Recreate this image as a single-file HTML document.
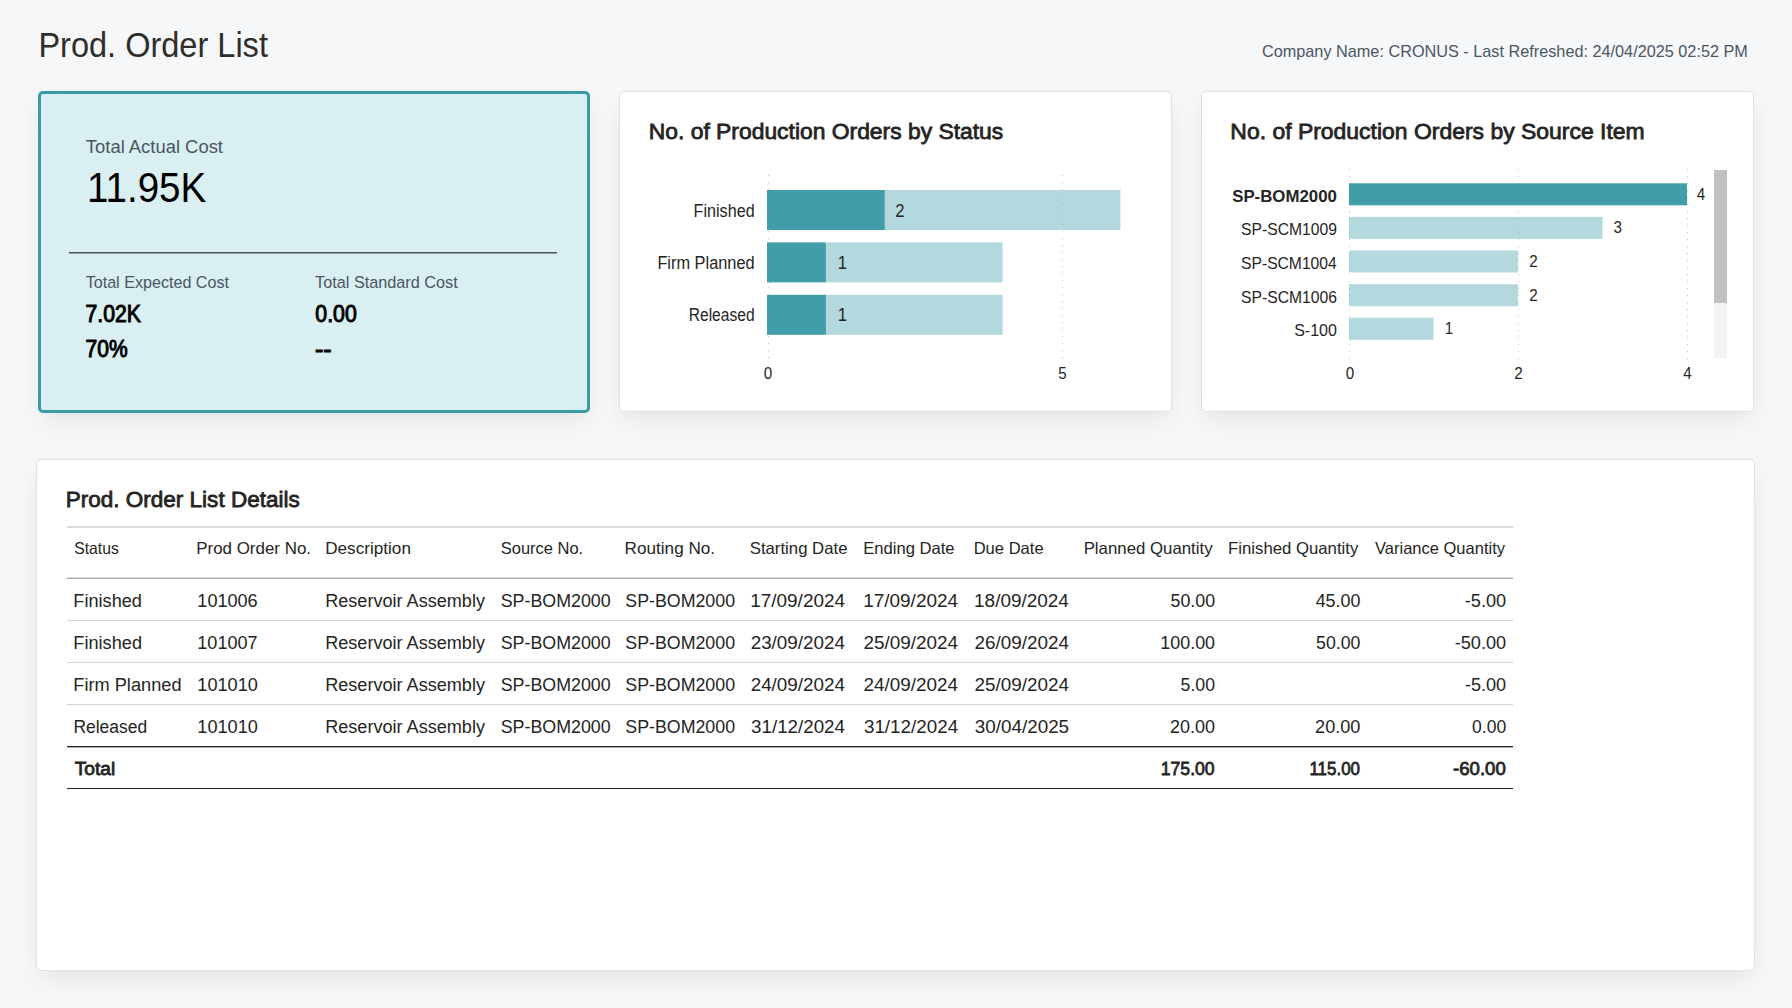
<!DOCTYPE html>
<html><head><meta charset="utf-8"><title>Prod. Order List</title>
<style>
html,body{margin:0;padding:0;width:1792px;height:1008px;overflow:hidden;background:#f6f7f9;}
.card{position:absolute;box-sizing:border-box;background:#fff;border:1px solid #e2e2e2;border-radius:5px;box-shadow:0 10px 26px -4px rgba(0,0,0,0.085);}
#c1{left:38px;top:91px;width:552px;height:322px;background:#d9eff1;border:3px solid #3a9ba6;}
#c2{left:619px;top:91px;width:553px;height:321px;}
#c3{left:1201px;top:91px;width:553px;height:321px;}
#c4{left:36px;top:459px;width:1719px;height:512px;}
svg{position:absolute;left:0;top:0;}
text{font-family:"Liberation Sans",sans-serif;}
</style></head><body>
<div class="card" id="c1"></div><div class="card" id="c2"></div><div class="card" id="c3"></div><div class="card" id="c4"></div>
<svg width="1792" height="1008" viewBox="0 0 1792 1008">
<rect x="69" y="252" width="488" height="1.5" fill="#4b5563"/>
<line x1="768.5" y1="175" x2="768.5" y2="360" stroke="rgba(0,0,0,0.22)" stroke-width="1" stroke-dasharray="1.2 5.8"/>
<line x1="1062.5" y1="175" x2="1062.5" y2="360" stroke="rgba(0,0,0,0.22)" stroke-width="1" stroke-dasharray="1.2 5.8"/>
<line x1="1349.5" y1="169" x2="1349.5" y2="360" stroke="rgba(0,0,0,0.22)" stroke-width="1" stroke-dasharray="1.2 5.8"/>
<line x1="1518.5" y1="169" x2="1518.5" y2="360" stroke="rgba(0,0,0,0.22)" stroke-width="1" stroke-dasharray="1.2 5.8"/>
<line x1="1687.5" y1="169" x2="1687.5" y2="360" stroke="rgba(0,0,0,0.22)" stroke-width="1" stroke-dasharray="1.2 5.8"/>
<rect x="884.8" y="190.0" width="235.6" height="40" fill="rgba(66,157,171,0.4)"/>
<rect x="767" y="190.0" width="117.8" height="40" fill="#429dab"/>
<rect x="825.9" y="242.4" width="176.7" height="40" fill="rgba(66,157,171,0.4)"/>
<rect x="767" y="242.4" width="58.9" height="40" fill="#429dab"/>
<rect x="825.9" y="294.8" width="176.7" height="40" fill="rgba(66,157,171,0.4)"/>
<rect x="767" y="294.8" width="58.9" height="40" fill="#429dab"/>
<rect x="1349" y="183.3" width="338.0" height="22" fill="#429dab"/>
<rect x="1349" y="216.9" width="253.5" height="22" fill="rgba(66,157,171,0.4)"/>
<rect x="1349" y="250.5" width="169.0" height="22" fill="rgba(66,157,171,0.4)"/>
<rect x="1349" y="284.2" width="169.0" height="22" fill="rgba(66,157,171,0.4)"/>
<rect x="1349" y="317.8" width="84.5" height="22" fill="rgba(66,157,171,0.4)"/>
<rect x="1714" y="170" width="13" height="188" fill="#f3f3f3"/>
<rect x="1714" y="170" width="13" height="133" fill="#c1c1c1"/>
<rect x="67" y="526" width="1446" height="2" fill="#d9dbe0"/>
<rect x="67" y="577" width="1446" height="1" fill="#d8dbe0"/>
<rect x="67" y="578" width="1446" height="1" fill="#a5abb5"/>
<rect x="67" y="620" width="1446" height="1" fill="#d1d4d8"/>
<rect x="67" y="662" width="1446" height="1" fill="#d1d4d8"/>
<rect x="67" y="704" width="1446" height="1" fill="#d1d4d8"/>
<rect x="67" y="746" width="1446" height="1" fill="#222"/>
<rect x="67" y="747" width="1446" height="1" fill="#b0b0b0"/>
<rect x="67" y="788" width="1446" height="1" fill="#222"/>
<text x="38.40" y="57.00" font-size="34.6" fill="#2e2d2c" textLength="229.53" lengthAdjust="spacingAndGlyphs">Prod. Order List</text>
<text x="1261.99" y="57.20" font-size="16.4" fill="#4b5563" textLength="485.90" lengthAdjust="spacingAndGlyphs">Company Name: CRONUS - Last Refreshed: 24/04/2025 02:52 PM</text>
<text x="85.83" y="152.90" font-size="18.75" fill="#4b5563" textLength="137.13" lengthAdjust="spacingAndGlyphs">Total Actual Cost</text>
<text x="86.90" y="202.00" font-size="42" fill="#000" textLength="119.37" lengthAdjust="spacingAndGlyphs">11.95K</text>
<text x="85.68" y="288.00" font-size="17.2" fill="#4b5563" textLength="143.29" lengthAdjust="spacingAndGlyphs">Total Expected Cost</text>
<text x="315.08" y="288.00" font-size="17.2" fill="#4b5563" textLength="142.59" lengthAdjust="spacingAndGlyphs">Total Standard Cost</text>
<text x="85.54" y="322.00" font-size="23.2" stroke="#000" stroke-width="1.0" fill="#000" textLength="55.20" lengthAdjust="spacingAndGlyphs">7.02K</text>
<text x="315.36" y="322.00" font-size="23.2" stroke="#000" stroke-width="1.0" fill="#000" textLength="41.41" lengthAdjust="spacingAndGlyphs">0.00</text>
<text x="85.55" y="356.80" font-size="23.2" stroke="#000" stroke-width="1.0" fill="#000" textLength="42.06" lengthAdjust="spacingAndGlyphs">70%</text>
<text x="315.01" y="356.80" font-size="23.2" stroke="#000" stroke-width="1.0" fill="#000" textLength="16.56" lengthAdjust="spacingAndGlyphs">--</text>
<text x="648.77" y="138.80" font-size="22.9" stroke="#252423" stroke-width="0.8" fill="#252423" textLength="354.51" lengthAdjust="spacingAndGlyphs">No. of Production Orders by Status</text>
<text x="693.61" y="217.00" font-size="17.5" fill="#252423" textLength="61.00" lengthAdjust="spacingAndGlyphs">Finished</text>
<text x="657.39" y="269.30" font-size="17.5" fill="#252423" textLength="97.23" lengthAdjust="spacingAndGlyphs">Firm Planned</text>
<text x="688.75" y="321.30" font-size="17.5" fill="#252423" textLength="65.82" lengthAdjust="spacingAndGlyphs">Released</text>
<text x="895.17" y="217.00" font-size="17.5" fill="#252423" textLength="9.25" lengthAdjust="spacingAndGlyphs">2</text>
<text x="837.74" y="269.30" font-size="17.5" fill="#252423" textLength="9.25" lengthAdjust="spacingAndGlyphs">1</text>
<text x="837.74" y="321.30" font-size="17.5" fill="#252423" textLength="9.25" lengthAdjust="spacingAndGlyphs">1</text>
<text x="763.82" y="378.50" font-size="16.0" fill="#252423" textLength="8.45" lengthAdjust="spacingAndGlyphs">0</text>
<text x="1058.24" y="378.50" font-size="16.0" fill="#252423" textLength="8.45" lengthAdjust="spacingAndGlyphs">5</text>
<text x="1230.37" y="139.00" font-size="22.9" stroke="#252423" stroke-width="0.8" fill="#252423" textLength="414.28" lengthAdjust="spacingAndGlyphs">No. of Production Orders by Source Item</text>
<text x="1232.16" y="201.50" font-size="16.5" font-weight="bold" fill="#252423" textLength="104.74" lengthAdjust="spacingAndGlyphs">SP-BOM2000</text>
<text x="1241.07" y="235.30" font-size="16.5" fill="#252423" textLength="95.95" lengthAdjust="spacingAndGlyphs">SP-SCM1009</text>
<text x="1241.07" y="268.80" font-size="16.5" fill="#252423" textLength="95.63" lengthAdjust="spacingAndGlyphs">SP-SCM1004</text>
<text x="1241.07" y="302.60" font-size="16.5" fill="#252423" textLength="95.79" lengthAdjust="spacingAndGlyphs">SP-SCM1006</text>
<text x="1294.16" y="336.00" font-size="16.5" fill="#252423" textLength="42.72" lengthAdjust="spacingAndGlyphs">S-100</text>
<text x="1696.70" y="199.50" font-size="16.0" fill="#252423" textLength="8.45" lengthAdjust="spacingAndGlyphs">4</text>
<text x="1613.54" y="233.20" font-size="16.0" fill="#252423" textLength="8.45" lengthAdjust="spacingAndGlyphs">3</text>
<text x="1529.24" y="266.80" font-size="16.0" fill="#252423" textLength="8.45" lengthAdjust="spacingAndGlyphs">2</text>
<text x="1529.24" y="300.50" font-size="16.0" fill="#252423" textLength="8.45" lengthAdjust="spacingAndGlyphs">2</text>
<text x="1444.74" y="334.00" font-size="16.0" fill="#252423" textLength="8.45" lengthAdjust="spacingAndGlyphs">1</text>
<text x="1345.82" y="378.50" font-size="16.0" fill="#252423" textLength="8.45" lengthAdjust="spacingAndGlyphs">0</text>
<text x="1514.24" y="378.50" font-size="16.0" fill="#252423" textLength="8.45" lengthAdjust="spacingAndGlyphs">2</text>
<text x="1683.32" y="378.50" font-size="16.0" fill="#252423" textLength="8.45" lengthAdjust="spacingAndGlyphs">4</text>
<text x="65.80" y="506.90" font-size="22.9" stroke="#252423" stroke-width="0.8" fill="#252423" textLength="233.88" lengthAdjust="spacingAndGlyphs">Prod. Order List Details</text>
<text x="74.17" y="553.70" font-size="16.5" fill="#252423" textLength="44.60" lengthAdjust="spacingAndGlyphs">Status</text>
<text x="196.25" y="553.70" font-size="16.5" fill="#252423" textLength="114.74" lengthAdjust="spacingAndGlyphs">Prod Order No.</text>
<text x="325.23" y="553.70" font-size="16.5" fill="#252423" textLength="85.73" lengthAdjust="spacingAndGlyphs">Description</text>
<text x="500.74" y="553.70" font-size="16.5" fill="#252423" textLength="82.41" lengthAdjust="spacingAndGlyphs">Source No.</text>
<text x="624.63" y="553.70" font-size="16.5" fill="#252423" textLength="90.48" lengthAdjust="spacingAndGlyphs">Routing No.</text>
<text x="749.73" y="553.70" font-size="16.5" fill="#252423" textLength="97.78" lengthAdjust="spacingAndGlyphs">Starting Date</text>
<text x="863.17" y="553.70" font-size="16.5" fill="#252423" textLength="91.43" lengthAdjust="spacingAndGlyphs">Ending Date</text>
<text x="973.68" y="553.70" font-size="16.5" fill="#252423" textLength="69.92" lengthAdjust="spacingAndGlyphs">Due Date</text>
<text x="1083.66" y="553.70" font-size="16.5" fill="#252423" textLength="128.94" lengthAdjust="spacingAndGlyphs">Planned Quantity</text>
<text x="1228.06" y="553.70" font-size="16.5" fill="#252423" textLength="130.24" lengthAdjust="spacingAndGlyphs">Finished Quantity</text>
<text x="1375.00" y="553.70" font-size="16.5" fill="#252423" textLength="130.00" lengthAdjust="spacingAndGlyphs">Variance Quantity</text>
<text x="73.35" y="606.80" font-size="18.8" fill="#252423" textLength="68.57" lengthAdjust="spacingAndGlyphs">Finished</text>
<text x="197.33" y="606.80" font-size="18.8" fill="#252423" textLength="60.32" lengthAdjust="spacingAndGlyphs">101006</text>
<text x="325.16" y="606.80" font-size="18.8" fill="#252423" textLength="159.84" lengthAdjust="spacingAndGlyphs">Reservoir Assembly</text>
<text x="500.69" y="606.80" font-size="18.8" fill="#252423" textLength="109.96" lengthAdjust="spacingAndGlyphs">SP-BOM2000</text>
<text x="625.29" y="606.80" font-size="18.8" fill="#252423" textLength="109.75" lengthAdjust="spacingAndGlyphs">SP-BOM2000</text>
<text x="750.28" y="606.80" font-size="18.8" fill="#252423" textLength="94.72" lengthAdjust="spacingAndGlyphs">17/09/2024</text>
<text x="863.17" y="606.80" font-size="18.8" fill="#252423" textLength="94.92" lengthAdjust="spacingAndGlyphs">17/09/2024</text>
<text x="974.07" y="606.80" font-size="18.8" fill="#252423" textLength="94.82" lengthAdjust="spacingAndGlyphs">18/09/2024</text>
<text x="1170.49" y="606.80" font-size="18.8" fill="#252423" textLength="44.56" lengthAdjust="spacingAndGlyphs">50.00</text>
<text x="1315.64" y="606.80" font-size="18.8" fill="#252423" textLength="44.81" lengthAdjust="spacingAndGlyphs">45.00</text>
<text x="1464.77" y="606.80" font-size="18.8" fill="#252423" textLength="41.38" lengthAdjust="spacingAndGlyphs">-5.00</text>
<text x="73.35" y="648.80" font-size="18.8" fill="#252423" textLength="68.67" lengthAdjust="spacingAndGlyphs">Finished</text>
<text x="197.34" y="648.80" font-size="18.8" fill="#252423" textLength="60.20" lengthAdjust="spacingAndGlyphs">101007</text>
<text x="325.16" y="648.80" font-size="18.8" fill="#252423" textLength="159.84" lengthAdjust="spacingAndGlyphs">Reservoir Assembly</text>
<text x="500.69" y="648.80" font-size="18.8" fill="#252423" textLength="109.96" lengthAdjust="spacingAndGlyphs">SP-BOM2000</text>
<text x="625.29" y="648.80" font-size="18.8" fill="#252423" textLength="109.75" lengthAdjust="spacingAndGlyphs">SP-BOM2000</text>
<text x="750.66" y="648.80" font-size="18.8" fill="#252423" textLength="94.34" lengthAdjust="spacingAndGlyphs">23/09/2024</text>
<text x="863.56" y="648.80" font-size="18.8" fill="#252423" textLength="94.54" lengthAdjust="spacingAndGlyphs">25/09/2024</text>
<text x="974.46" y="648.80" font-size="18.8" fill="#252423" textLength="94.44" lengthAdjust="spacingAndGlyphs">26/09/2024</text>
<text x="1160.35" y="648.80" font-size="18.8" fill="#252423" textLength="54.70" lengthAdjust="spacingAndGlyphs">100.00</text>
<text x="1316.09" y="648.80" font-size="18.8" fill="#252423" textLength="44.35" lengthAdjust="spacingAndGlyphs">50.00</text>
<text x="1454.78" y="648.80" font-size="18.8" fill="#252423" textLength="51.38" lengthAdjust="spacingAndGlyphs">-50.00</text>
<text x="73.34" y="690.80" font-size="18.8" fill="#252423" textLength="108.18" lengthAdjust="spacingAndGlyphs">Firm Planned</text>
<text x="197.33" y="690.80" font-size="18.8" fill="#252423" textLength="60.53" lengthAdjust="spacingAndGlyphs">101010</text>
<text x="325.16" y="690.80" font-size="18.8" fill="#252423" textLength="159.84" lengthAdjust="spacingAndGlyphs">Reservoir Assembly</text>
<text x="500.69" y="690.80" font-size="18.8" fill="#252423" textLength="109.96" lengthAdjust="spacingAndGlyphs">SP-BOM2000</text>
<text x="625.29" y="690.80" font-size="18.8" fill="#252423" textLength="109.75" lengthAdjust="spacingAndGlyphs">SP-BOM2000</text>
<text x="750.66" y="690.80" font-size="18.8" fill="#252423" textLength="94.34" lengthAdjust="spacingAndGlyphs">24/09/2024</text>
<text x="863.56" y="690.80" font-size="18.8" fill="#252423" textLength="94.54" lengthAdjust="spacingAndGlyphs">24/09/2024</text>
<text x="974.46" y="690.80" font-size="18.8" fill="#252423" textLength="94.44" lengthAdjust="spacingAndGlyphs">25/09/2024</text>
<text x="1180.59" y="690.80" font-size="18.8" fill="#252423" textLength="34.45" lengthAdjust="spacingAndGlyphs">5.00</text>
<text x="1464.88" y="690.80" font-size="18.8" fill="#252423" textLength="41.28" lengthAdjust="spacingAndGlyphs">-5.00</text>
<text x="73.40" y="732.80" font-size="18.8" fill="#252423" textLength="73.78" lengthAdjust="spacingAndGlyphs">Released</text>
<text x="197.33" y="732.80" font-size="18.8" fill="#252423" textLength="60.53" lengthAdjust="spacingAndGlyphs">101010</text>
<text x="325.16" y="732.80" font-size="18.8" fill="#252423" textLength="159.84" lengthAdjust="spacingAndGlyphs">Reservoir Assembly</text>
<text x="500.69" y="732.80" font-size="18.8" fill="#252423" textLength="109.96" lengthAdjust="spacingAndGlyphs">SP-BOM2000</text>
<text x="625.29" y="732.80" font-size="18.8" fill="#252423" textLength="109.75" lengthAdjust="spacingAndGlyphs">SP-BOM2000</text>
<text x="751.04" y="732.80" font-size="18.8" fill="#252423" textLength="93.95" lengthAdjust="spacingAndGlyphs">31/12/2024</text>
<text x="863.94" y="732.80" font-size="18.8" fill="#252423" textLength="94.16" lengthAdjust="spacingAndGlyphs">31/12/2024</text>
<text x="974.84" y="732.80" font-size="18.8" fill="#252423" textLength="94.25" lengthAdjust="spacingAndGlyphs">30/04/2025</text>
<text x="1170.10" y="732.80" font-size="18.8" fill="#252423" textLength="44.95" lengthAdjust="spacingAndGlyphs">20.00</text>
<text x="1315.09" y="732.80" font-size="18.8" fill="#252423" textLength="45.36" lengthAdjust="spacingAndGlyphs">20.00</text>
<text x="1472.08" y="732.80" font-size="18.8" fill="#252423" textLength="34.06" lengthAdjust="spacingAndGlyphs">0.00</text>
<text x="74.82" y="774.80" font-size="18.8" stroke="#252423" stroke-width="0.8" fill="#252423" textLength="40.37" lengthAdjust="spacingAndGlyphs">Total</text>
<text x="1160.77" y="774.80" font-size="18.8" stroke="#252423" stroke-width="0.8" fill="#252423" textLength="53.87" lengthAdjust="spacingAndGlyphs">175.00</text>
<text x="1309.41" y="774.80" font-size="18.8" stroke="#252423" stroke-width="0.8" fill="#252423" textLength="50.60" lengthAdjust="spacingAndGlyphs">115.00</text>
<text x="1453.06" y="774.80" font-size="18.8" stroke="#252423" stroke-width="0.8" fill="#252423" textLength="52.72" lengthAdjust="spacingAndGlyphs">-60.00</text>
</svg>
</body></html>
